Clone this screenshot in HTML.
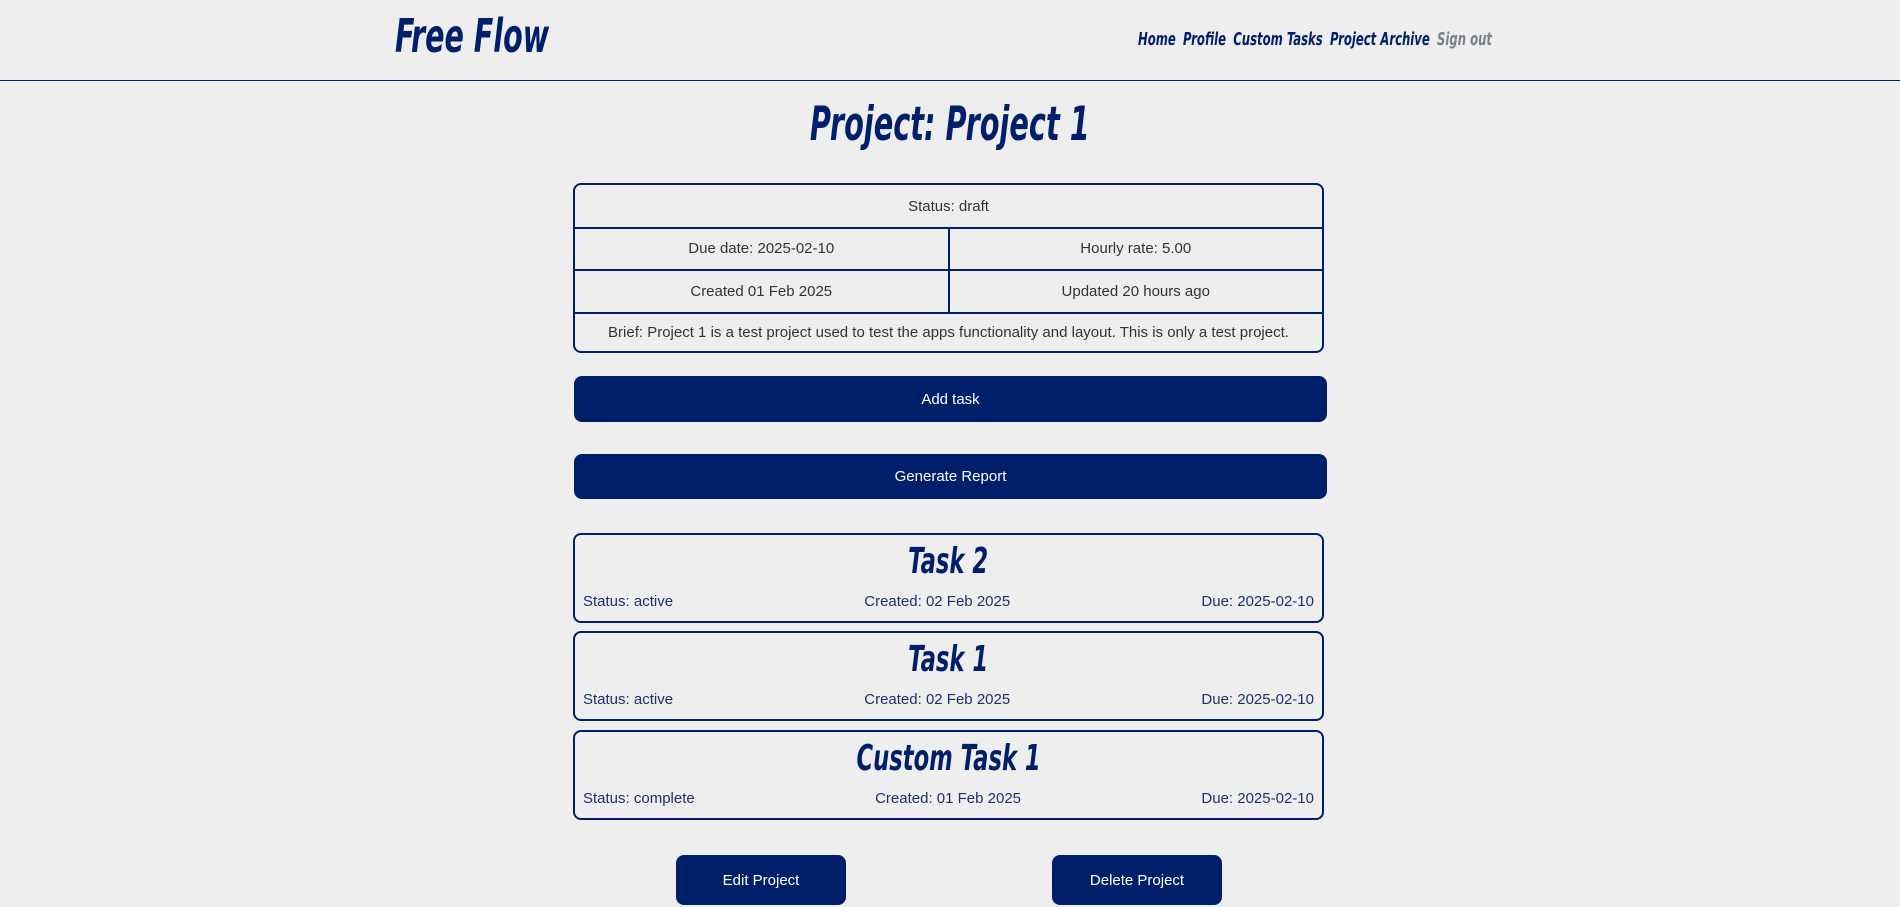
<!DOCTYPE html>
<html><head><meta charset="utf-8">
<style>
html,body{margin:0;padding:0;background:#eeeeee;width:1900px;height:907px;overflow:hidden}
body{position:relative;font-family:"Liberation Sans",sans-serif}
.cond{font-family:"DejaVu Sans Condensed","DejaVu Sans",sans-serif;font-weight:bold;font-style:italic;color:#001f6b}
.abs{position:absolute}
.sq{display:inline-block;white-space:nowrap}
#logo{left:395px;top:9px;font-size:46px;white-space:nowrap}
#logo .sq{transform:scaleX(0.69);transform-origin:left center}
#nav{left:1138px;top:29px;font-size:18px;white-space:nowrap}
#nav .sq{transform:scaleX(0.72);transform-origin:left center}
#nav span span{margin-right:10px}
#line{left:0;top:80px;width:1900px;height:1px;background:#001f6b}
#title{left:0;width:1900px;text-align:center;top:97px;font-size:47px}
#title .sq{transform:scaleX(0.68)}
.card{position:absolute;left:573px;width:747px;border:2px solid #001f6b;border-radius:8px;box-sizing:content-box}
.info{top:183px;height:166px;overflow:hidden}
.row{position:absolute;left:0;width:747px;height:42px;border-bottom:2px solid #001f6b;display:flex;font-size:15px;color:#333}
.row div{flex:1;display:flex;align-items:center;justify-content:center}
.row div+div{border-left:2px solid #001f6b}
.btn{position:absolute;background:#001f6b;color:#fff;border-radius:8px;display:flex;align-items:center;justify-content:center;font-size:15px}
.task{height:86px}
.task .t{position:absolute;left:0;width:747px;text-align:center;top:6px;font-size:36px}
.task .t .sq{transform:scaleX(0.7)}
.task .m{position:absolute;left:8px;right:8px;top:58px;display:flex;justify-content:space-between;font-size:15px;color:#1f2f6b}
</style></head><body>
<div id="logo" class="abs cond"><span class="sq">Free Flow</span></div>
<div id="nav" class="abs cond"><span class="sq"><span>Home</span><span>Profile</span><span>Custom Tasks</span><span>Project Archive</span><span style="color:#7a7f8c;margin:0">Sign out</span></span></div>
<div id="line" class="abs"></div>
<div id="title" class="abs cond"><span class="sq">Project: Project 1</span></div>

<div class="card info">
 <div class="row" style="top:0"><div>Status: draft</div></div>
 <div class="row" style="top:42px"><div>Due date: 2025-02-10</div><div>Hourly rate: 5.00</div></div>
 <div class="row" style="top:85px"><div>Created 01 Feb 2025</div><div>Updated 20 hours ago</div></div>
 <div class="row" style="top:128px;border:none;height:38px"><div>Brief: Project 1 is a test project used to test the apps functionality and layout. This is only a test project.</div></div>
</div>

<div class="btn" style="left:574px;top:376px;width:753px;height:46px">Add task</div>
<div class="btn" style="left:574px;top:454px;width:753px;height:45px">Generate Report</div>

<div class="card task" style="top:533px"><div class="t cond"><span class="sq">Task 2</span></div><div class="m"><span>Status: active</span><span>Created: 02 Feb 2025</span><span>Due: 2025-02-10</span></div></div>
<div class="card task" style="top:631px"><div class="t cond"><span class="sq">Task 1</span></div><div class="m"><span>Status: active</span><span>Created: 02 Feb 2025</span><span>Due: 2025-02-10</span></div></div>
<div class="card task" style="top:730px"><div class="t cond"><span class="sq">Custom Task 1</span></div><div class="m"><span>Status: complete</span><span>Created: 01 Feb 2025</span><span>Due: 2025-02-10</span></div></div>

<div class="btn" style="left:676px;top:855px;width:170px;height:50px">Edit Project</div>
<div class="btn" style="left:1052px;top:855px;width:170px;height:50px">Delete Project</div>
</body></html>
